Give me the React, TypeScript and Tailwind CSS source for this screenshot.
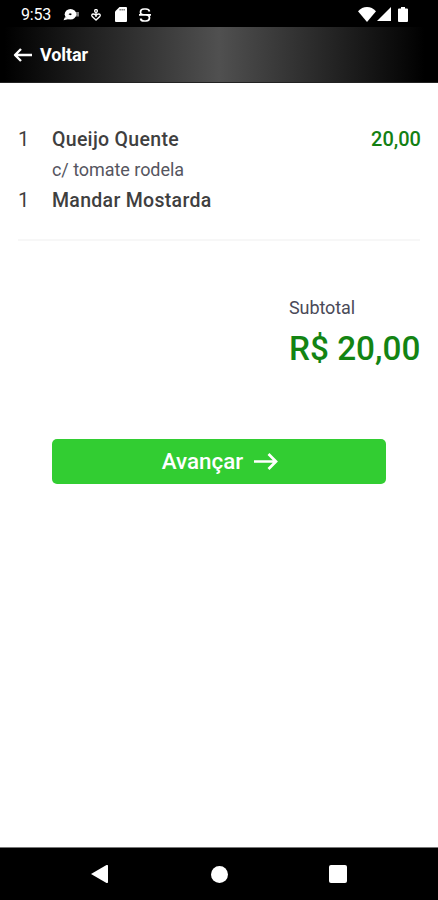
import React from 'react';

const items = [
  { qty: 1, name: 'Queijo Quente', note: 'c/ tomate rodela', price: '20,00' },
  { qty: 1, name: 'Mandar Mostarda' },
];

function StatusBar() {
  return (
    <div className="flex h-[27px] items-center justify-between bg-black pl-[21px] pr-[30px] text-white">
      <div className="flex items-center pt-[2px]">
        <span className="w-[30px] text-base leading-4 whitespace-nowrap tracking-[-0.2px]">9:53</span>
        <svg className="ml-3 h-[14px] w-4" viewBox="0 0 16 14" fill="currentColor">
          <ellipse cx="7.5" cy="6.2" rx="5.8" ry="5.2" />
          <path d="M2 9 .5 12.2 6 11z" />
          <path d="M12 4h4v4.5h-4z" opacity="0.5" />
          <path d="M5.5 6.2 7 5.2 9 6 7.5 7.2z" fill="#000" />
        </svg>
        <svg className="ml-3 h-3 w-[10px]" viewBox="0 0 10 12" fill="none" stroke="currentColor" strokeWidth="1.3">
          <circle cx="5" cy="1.9" r="1.4" />
          <path d="M5 3v5M5 11 1.2 7.5Q0 5.5 2 5q1.8-.2 3 1.6Q6.2 4.8 8 5q2 .5.8 2.5z" />
        </svg>
        <svg className="ml-[14px] h-[15px] w-3" viewBox="0 0 12 15" fill="currentColor">
          <path d="M4.5 0H11a1 1 0 0 1 1 1v13a1 1 0 0 1-1 1H1a1 1 0 0 1-1-1V4.5z" />
          <path d="M4.5 2.8H10" stroke="#000" strokeOpacity="0.6" strokeWidth="1.6" strokeDasharray="1.3 .7" />
        </svg>
        <svg className="ml-3 h-[14px] w-3" viewBox="0 0 12 14" fill="none" stroke="currentColor" strokeWidth="1.7">
          <path d="M10.5 3.5Q10 1 7 1H5Q1.5 1 1.5 4T5 6.8h2q3.5 0 3.5 3T7 13H5q-3 0-3.5-2.5M0 6.8h12" />
        </svg>
      </div>
      <div className="flex items-center pt-[1px]">
        <svg className="h-[15px] w-[18px]" viewBox="0 0 18 15" fill="currentColor">
          <path d="M0 4.2C2.5 1.5 5.6 0 9 0s6.5 1.5 9 4.2L9 15z" />
        </svg>
        <svg className="ml-px h-[14px] w-[14px]" viewBox="0 0 14 14" fill="currentColor">
          <path d="M14 0v14H0z" />
        </svg>
        <svg className="ml-[7px] h-[15px] w-[10px]" viewBox="0 0 10 15" fill="currentColor">
          <path d="M3 0h4v1.5h2a1 1 0 0 1 1 1V14a1 1 0 0 1-1 1H1a1 1 0 0 1-1-1V2.5a1 1 0 0 1 1-1h2z" />
        </svg>
      </div>
    </div>
  );
}

function Header() {
  return (
    <header className="h-14 border-b border-[#222] bg-[linear-gradient(to_right,#000_1%,#505050_50%,#000_97%)]">
      <button className="flex h-full items-center pl-[13px] text-white">
        <svg className="h-[14px] w-[19px]" viewBox="0 0 19 14" fill="none" stroke="currentColor" strokeWidth="2.4" strokeLinejoin="round">
          <path d="M19 7H2M8 1 2 7l6 6" />
        </svg>
        <span className="ml-2 text-lg font-bold tracking-[-0.1px]">Voltar</span>
      </button>
    </header>
  );
}

export default function App() {
  return (
    <div className="flex h-[900px] w-[438px] flex-col bg-white font-['Roboto',sans-serif]">
      <StatusBar />
      <Header />

      <main className="flex-1 pt-[41px]">
        {/* Itens do pedido */}
        <ul className="mx-[18px] h-[117px] border-b-2 border-[#f7f7f7]">
          {items.map((item) => (
            <li key={item.name} className="flex text-xl leading-[31px] text-[#3f3f3f]">
              <span className="w-[34px]">{item.qty}</span>
              <div className="flex-1">
                <p className="text-[19.5px] font-medium tracking-[0.3px]">{item.name}</p>
                {item.note && <p className="text-lg leading-[30px] tracking-[-0.05px] text-[#555560]">{item.note}</p>}
              </div>
              {item.price && <span className="-mr-px font-medium text-[#138013]">{item.price}</span>}
            </li>
          ))}
        </ul>

        {/* Total */}
        <div className="mr-[18px] mt-[52px] flex justify-end">
          <div className="w-[131px] whitespace-nowrap">
            <p className="text-lg leading-[30px] tracking-[-0.1px] text-[#4a4a58]">Subtotal</p>
            <p className="text-[33.3px] leading-[52px] font-medium text-[#138413]">R$ 20,00</p>
          </div>
        </div>

        <button className="mx-[52px] mt-[64px] flex h-[45px] w-[334px] items-center justify-center rounded-[5px] bg-[#32cd32] pl-[2px] text-white">
          <span className="text-[22.4px] font-medium">Avançar</span>
          <svg className="ml-[11px] h-[17px] w-6" viewBox="0 0 24 17" fill="none" stroke="currentColor" strokeWidth="2.7">
            <path d="M0 8.5h22M14.5 1l7.5 7.5-7.5 7.5" />
          </svg>
        </button>
      </main>

      <nav className="flex h-[53px] items-center border-t border-[#777] bg-black pl-[91px] text-white">
        <svg className="h-[18px] w-[17px]" viewBox="0 0 17 18" fill="currentColor">
          <path d="M0 9 15.5 0q1.500-.3 1.500 1v16q0 1.300-1.500 1z" />
        </svg>
        <span className="ml-[103px] h-[17px] w-[17px] rounded-full bg-white" />
        <span className="ml-[101px] h-[18px] w-[18px] rounded-[2px] bg-white" />
      </nav>
    </div>
  );
}
